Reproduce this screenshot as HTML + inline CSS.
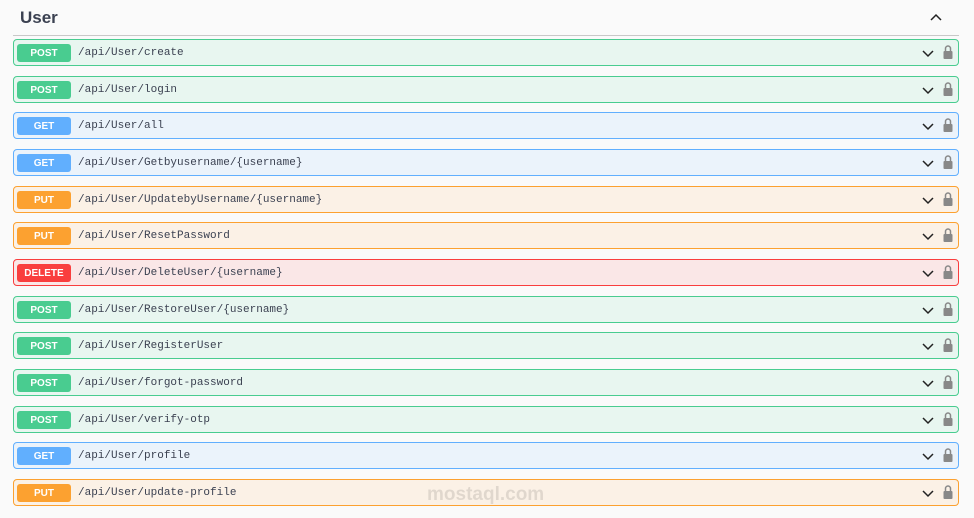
<!DOCTYPE html>
<html><head><style>
body{margin:0;width:974px;height:518px;background:#fafafa;font-family:"Liberation Sans",sans-serif;position:relative;overflow:hidden}
.t{position:absolute;left:20px;top:8px;font-size:17px;font-weight:bold;color:#3b4151}
.sep{position:absolute;left:13px;width:946px;top:35px;height:1px;background:#c8c8c8}
.r{position:absolute;left:13px;width:944px;height:25px;border:1px solid;border-radius:4px;box-sizing:content-box}
.b{position:absolute;left:3px;top:4px;width:54px;height:18px;border-radius:3px;color:#fff;font-size:10px;font-weight:bold;text-align:center;line-height:19px}
.p{position:absolute;left:64px;top:1px;line-height:25px;font-family:"Liberation Mono",monospace;font-size:11px;color:#3b4151}
.post{background:#e8f6f0;border-color:#49cc90}.post .b{background:#49cc90}
.get{background:#ebf3fb;border-color:#61affe}.get .b{background:#61affe}
.put{background:#fbf1e6;border-color:#fca130}.put .b{background:#fca130}
.del{background:#fae7e7;border-color:#f93e3e}.del .b{background:#f93e3e}
.ic{position:absolute;right:0;top:0}
.wm{position:absolute;left:427px;top:484px;font-size:19px;color:#000;opacity:.1;font-weight:bold}
</style></head><body>
<div class="t">User</div>
<svg style="position:absolute;left:929px;top:12px" width="14" height="10"><path d="M2 8 L7 3 L12 8" fill="none" stroke="#222" stroke-width="1.5"/></svg>
<div class="sep"></div>
<div id="rows"></div>
<script>
var d=[["post","POST","/api/User/create"],["post","POST","/api/User/login"],["get","GET","/api/User/all"],["get","GET","/api/User/Getbyusername/{username}"],["put","PUT","/api/User/UpdatebyUsername/{username}"],["put","PUT","/api/User/ResetPassword"],["del","DELETE","/api/User/DeleteUser/{username}"],["post","POST","/api/User/RestoreUser/{username}"],["post","POST","/api/User/RegisterUser"],["post","POST","/api/User/forgot-password"],["post","POST","/api/User/verify-otp"],["get","GET","/api/User/profile"],["put","PUT","/api/User/update-profile"]];
var h="";d.forEach(function(x,i){var y=Math.round(39+i*36.65);
h+='<div class="r '+x[0]+'" style="top:'+y+'px"><div class="b">'+x[1]+'</div><div class="p">'+x[2]+'</div><svg class="ic" width="44" height="25"><path d="M9 11 L14 16 L19 11" fill="none" stroke="#222" stroke-width="1.5"/><rect x="29.5" y="11" width="9" height="8" rx="1" fill="#888"/><path d="M31.5 11 V8.5 a2.5 2.5 0 0 1 5 0 V11" fill="none" stroke="#888" stroke-width="1.5"/></svg></div>';});
document.getElementById("rows").innerHTML=h;
</script>
<div class="wm">mostaql.com</div>
</body></html>
